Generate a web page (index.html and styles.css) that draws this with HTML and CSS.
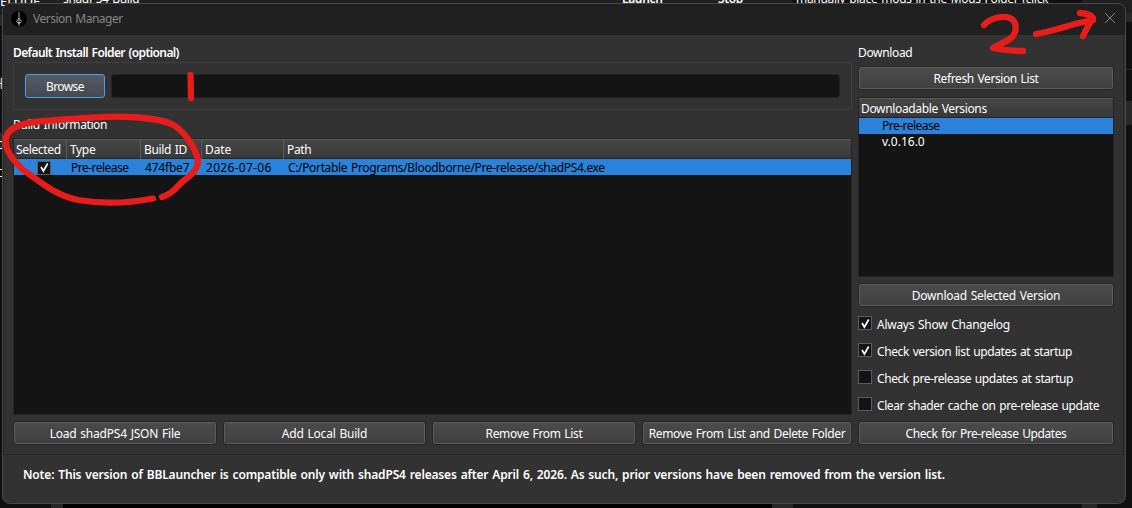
FILE: index.html
```
<!DOCTYPE html>
<html lang="en">
<head>
<meta charset="utf-8">
<title>Version Manager</title>
<link rel="stylesheet" href="styles.css">
</head>
<body>
<div class="backdrop">
  <div class="strip"><span class="s-a">ELUDE</span><span class="s-b">shadPS4 Build</span><span class="s-c">Launch</span><span class="s-d">Stop</span><span class="s-e">manually place mods in the Mods Folder (click</span></div>
  <i class="edge e1"></i><i class="edge e2"></i><i class="edge e3"></i><i class="edge e4"></i><i class="edge e5"></i><i class="edge e6"></i><i class="edge e7"></i><i class="edge e8"></i><i class="edge e9"></i>
  <span class="bit b1">해</span><span class="bit b2">C</span><span class="bit b3">C</span>
</div>
<main class="dialog">
  <header class="titlebar">
    <svg class="logo" width="16" height="16" viewBox="0 0 16 16"><circle cx="8" cy="8" r="8" fill="#000"/><path d="M8 1v14M8 7L5.5 10.5 8 13l2.5-2.5L8 7M6 11.5h4" fill="none" stroke="#a5a5a5" stroke-width="1"/></svg>
    <span class="title">Version Manager</span>
    <svg class="close" width="12" height="12" viewBox="0 0 12 12"><path d="M1 1l10 10M11 1L1 11" stroke="#858585" fill="none"/></svg>
  </header>
  <div class="body">
    <section class="left">
      <h2 class="label bold"><span class="t-default">Default Install Folder (optional)</span></h2>
      <div class="group">
        <button class="btn focus"><span class="t-browse">Browse</span></button>
        <div class="field"></div>
      </div>
      <h2 class="label build"><span class="t-info">Build Information</span></h2>
      <div class="table">
        <div class="row head"><span>Selected</span><span>Type</span><span>Build ID</span><span class="t-dhead">Date</span><span>Path</span></div>
        <div class="row pick"><span><i class="check"><svg width="13" height="13" viewBox="0 0 13 13"><path d="M3 6l2.4 4L9.7 2.5"/></svg></i></span><span class="t-pre">Pre-release</span><span class="t-id">474fbe7</span><span class="t-date">2026-07-06</span><span class="t-path">C:/Portable Programs/Bloodborne/Pre-release/shadPS4.exe</span></div>
      </div>
      <div class="actions">
        <button class="btn"><span class="t-load">Load shadPS4 JSON File</span></button>
        <button class="btn"><span class="t-load">Add Local Build</span></button>
        <button class="btn"><span>Remove From List</span></button>
        <button class="btn"><span>Remove From List and Delete Folder</span></button>
      </div>
    </section>
    <section class="right">
      <h2 class="label"><span>Download</span></h2>
      <button class="btn"><span class="t-ref">Refresh Version List</span></button>
      <div class="versions">
        <div class="vhead"><span>Downloadable Versions</span></div>
        <div class="item pick"><span class="t-pre">Pre-release</span></div>
        <div class="item"><span class="t-v">v.0.16.0</span></div>
      </div>
      <button class="btn"><span class="t-dsv">Download Selected Version</span></button>
      <div class="options">
        <label><i class="check"><svg width="13" height="13" viewBox="0 0 13 13"><path d="M3 6l2.4 4L9.7 2.5"/></svg></i><span class="t-o1">Always Show Changelog</span></label>
        <label><i class="check"><svg width="13" height="13" viewBox="0 0 13 13"><path d="M3 6l2.4 4L9.7 2.5"/></svg></i><span class="t-o2">Check version list updates at startup</span></label>
        <label><i class="check"></i><span class="t-o3">Check pre-release updates at startup</span></label>
        <label><i class="check"></i><span class="t-o3">Clear shader cache on pre-release update</span></label>
      </div>
      <button class="btn"><span class="t-chk">Check for Pre-release Updates</span></button>
    </section>
  </div>
  <footer class="note"><span class="t-note">Note: This version of BBLauncher is compatible only with shadPS4 releases after April 6, 2026. As such, prior versions have been removed from the version list.</span></footer>
</main>
<svg class="ink" width="1132" height="508" viewBox="0 0 1132 508">
  <path d="M190.500 75l.5 23"/>
  <path d="M153 198.500C130 203 102 204 78 200C55 195 40 182 22 169C10 157 4 148 6 137C10 126 25 122 45 121C75 119 105 115 130 117C150 118 166 120 175 126C188 135 198 153 198 163C196 174 185 178 179 185C174 191 168 195 162 197"/>
  <path d="M984 25C990 18 1003 15 1010 18C1018 22 1017 33 1011 38C1005 43 997 45 993 48Q1008 51 1023 51"/>
  <path d="M1036 34C1056 31 1070 24 1093 20M1080 13Q1091 14 1093 18Q1087 27 1083 36"/>
</svg>
</body>
</html>
```
FILE: styles.css
```
* { box-sizing: border-box; }
body { margin: 0; width: 1132px; height: 508px; overflow: hidden; position: relative; background: #050505; color: #fff; font: 12px/16px "Noto Sans", "Noto Sans CJK KR", sans-serif; letter-spacing: -0.35px; word-spacing: 1px; }
span { white-space: nowrap; }
h2 { margin: 0; font-size: 12px; font-weight: 400; }
.backdrop { position: absolute; inset: 0; overflow: hidden; background: #101010; }
.strip { position: absolute; inset: 0 0 auto; height: 13px; background: #202020; }
.strip span { position: absolute; top: -9px; }
.strip .s-a { left: 0; top: -7px; font-size: 13px; letter-spacing: 0; }
.strip .s-b { left: 63px; }
.strip .s-c { left: 622px; font-weight: 600; }
.strip .s-d { left: 718px; font-weight: 600; }
.strip .s-e { left: 792px; width: 290px; height: 20px; padding-left: 4px; background: #101010; letter-spacing: -0.3px; }
.edge { position: absolute; background: #282828; }
.e1 { left: 0; top: 14px; width: 3px; height: 12px; }
.e2 { left: 0; top: 133px; width: 3px; height: 17px; }
.e3 { left: 1125px; top: 13px; width: 7px; height: 9px; }
.e4 { left: 1125px; top: 69px; width: 7px; height: 1px; }
.e5 { left: 1125px; top: 101px; width: 7px; height: 24px; }
.e6 { left: 51px; top: 503px; width: 12px; height: 5px; }
.e7 { left: 63px; top: 503px; width: 710px; height: 5px; background: #000; }
.e8 { left: 772px; top: 503px; width: 21px; height: 5px; }
.e9 { left: 1082px; top: 503px; width: 15px; height: 5px; }
.bit { position: absolute; left: -7px; font-size: 11px; }
.b1 { top: 76px; } .b2 { top: 137px; left: -4px; } .b3 { top: 165px; left: -4px; }
.dialog { position: absolute; left: 2px; top: 3px; width: 1124px; height: 501px; border: 1px solid #484848; border-radius: 8px; background: #323232; overflow: hidden; display: flex; flex-direction: column; }
.titlebar { height: 31px; flex: none; background: #202020; display: flex; align-items: center; padding: 0 9px 2px 8px; color: #858585; }
.title { margin-left: 6px; letter-spacing: -0.5px; }
.close { margin: -1px 0 0 auto; }
.body { display: flex; gap: 6px; height: 420px; margin-right: 1px; padding: 9px 10px 0 9px; border: 1px solid #272727; border-top: 0; }
.left { width: 839px; flex: none; display: flex; flex-direction: column; }
.right { width: 256px; flex: none; display: flex; flex-direction: column; }
.label { height: 18px; line-height: 18px; }
.bold { font-weight: 600; }
.group { height: 48px; border: 1px solid #404040; border-radius: 2px; display: flex; align-items: center; gap: 6px; padding: 0 11px; }
.btn { height: 24px; padding: 2px 0 0; border: 1px solid #262626; border-radius: 3px; box-shadow: inset 0 0 0 1px #5c5c5c; background: linear-gradient(#4b4b4b, #404040); color: #fff; font: inherit; letter-spacing: inherit; word-spacing: inherit; display: flex; align-items: center; justify-content: center; }
.focus { width: 80px; border-color: #509ce8; box-shadow: none; background: linear-gradient(#555b65, #444a52); }
.field { flex: 1; height: 24px; border: 1px solid #242424; border-radius: 3px; background: #141414; }
.build { margin-top: 6px; }
.table { margin-top: 4px; height: 277px; border: 1px solid #242424; background: #141414; }
.row { display: grid; grid-template-columns: 53px 74px 61px 82px 1fr; }
.head { height: 20px; background: linear-gradient(#464646, #383838); border-top: 1px solid #5a5a5a; border-bottom: 1px solid #242424; line-height: 19px; }
.head span { padding-left: 3px; border-right: 1px solid #5a5a5a; }
.head span:last-child { border: 0; }
.head span:first-child { padding-left: 2px; }
.pick { background: #2a82da; color: #000; height: 16px; }
.row.pick { line-height: 17px; }
.row.pick span { padding-left: 4px; }
.row.pick span:first-child { padding-left: 23px; display: flex; align-items: center; }
.check { width: 14px; height: 14px; flex: none; display: flex; align-items: center; justify-content: center; border: 1px solid #5c5c5c; background: #141414; }
.check svg { fill: none; stroke: #fff; stroke-width: 1.7; flex: none; }
.actions { margin-top: 6px; display: grid; grid-template-columns: 204px 203px 204px 210px; justify-content: space-between; }
.right .btn { width: 256px; flex: none; }
.right > .btn:nth-of-type(1) { margin-top: 4px; }
.versions { margin: 7px 0 6px; height: 180px; border: 1px solid #242424; background: #141414; }
.vhead { height: 20px; padding-left: 2px; background: linear-gradient(#464646, #383838); border-top: 1px solid #5a5a5a; border-bottom: 1px solid #242424; line-height: 19px; }
.item { padding-left: 23px; height: 16px; }
.options { height: 114px; padding-top: 9px; display: flex; flex-direction: column; gap: 11px; }
.options label { display: flex; gap: 5px; height: 16px; line-height: 18px; }
.note { padding: 11px 20px; font-weight: 600; line-height: 18px; }
.t-default { letter-spacing: -0.6px; }
.t-browse { letter-spacing: -0.6px; }
.t-info { letter-spacing: -0.4px; }
.t-dhead { letter-spacing: -0.1px; }
.t-pre { letter-spacing: -0.53px; }
.t-id { letter-spacing: -0.2px; }
.t-date { letter-spacing: 0.3px; }
.t-v { letter-spacing: 0; }
.t-load { letter-spacing: -0.22px; }
.t-ref { letter-spacing: -0.4px; }
.t-dsv { letter-spacing: -0.27px; }
.t-o1 { letter-spacing: -0.27px; }
.t-o2 { letter-spacing: -0.4px; }
.t-o3 { letter-spacing: -0.43px; }
.t-chk { letter-spacing: -0.42px; }
.t-note { letter-spacing: -0.167px; }
.ink { position: absolute; left: 0; top: 0; fill: none; stroke: #e71d1c; stroke-width: 6.3; stroke-linecap: round; stroke-linejoin: round; }
```
